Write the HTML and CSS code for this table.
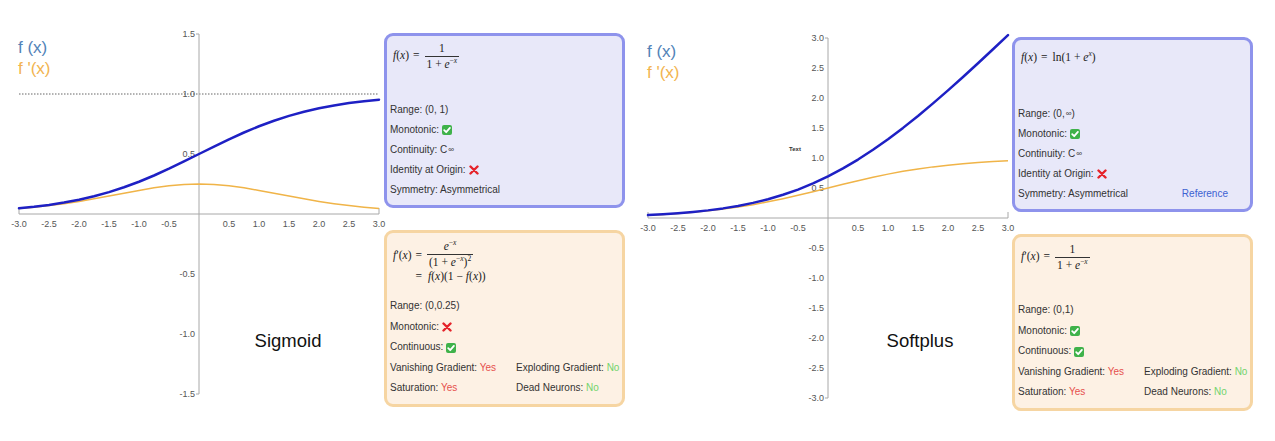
FILE: index.html
```html
<!DOCTYPE html>
<html lang="en">
<head>
<meta charset="utf-8">
<title>Activation functions</title>
<link rel="stylesheet" href="styles.css">
</head>
<body>
<div class="page">

  <!-- Sigmoid panel -->
  <section class="panel">
    <svg class="chart" viewBox="0 0 384 420" width="384" height="420">
      <text class="legend legend-f" x="18" y="53">f (x)</text>
      <text class="legend legend-d" x="18" y="74">f '(x)</text>

      <line class="dotted" x1="19" y1="94" x2="379" y2="94"/>

      <path class="axis" d="M19,208V214H379V208"/>
      <path class="axis" d="M196,34H199V394H196"/>

      <g class="ylab">
        <text x="195" y="34">1.5</text>
        <text x="195" y="94">1.0</text>
        <text x="195" y="154">0.5</text>
        <text x="195" y="274">-0.5</text>
        <text x="195" y="334">-1.0</text>
        <text x="195" y="394">-1.5</text>
      </g>
      <g class="xlab">
        <text x="19" y="227">-3.0</text>
        <text x="49" y="227">-2.5</text>
        <text x="79" y="227">-2.0</text>
        <text x="109" y="227">-1.5</text>
        <text x="139" y="227">-1.0</text>
        <text x="169" y="227">-0.5</text>
        <text x="229" y="227">0.5</text>
        <text x="259" y="227">1.0</text>
        <text x="289" y="227">1.5</text>
        <text x="319" y="227">2.0</text>
        <text x="349" y="227">2.5</text>
        <text x="379" y="227">3.0</text>
      </g>

      <polyline class="curve-d" points="19,208.58 34,207.22 49,205.59 64,203.65 79,201.40 94,198.86 109,196.10 124,193.23 139,190.41 154,187.85 169,185.80 184,184.46 199,184 214,184.46 229,185.80 244,187.85 259,190.41 274,193.23 289,196.10 304,198.86 319,201.40 334,203.65 349,205.59 364,207.22 379,208.58"/>
      <polyline class="curve-f" points="19,208.31 34,206.79 49,204.90 64,202.56 79,199.70 94,196.23 109,192.11 124,187.28 139,181.73 154,175.50 169,168.70 184,161.46 199,154 214,146.54 229,139.30 244,132.50 259,126.27 274,120.72 289,115.89 304,111.77 319,108.30 334,105.44 349,103.10 364,101.21 379,99.69"/>

      <text class="title" x="288" y="347">Sigmoid</text>
    </svg>

    <div class="cards">
      <div class="card card-blue">
        <div class="formula"><span class="mi">f</span>(<span class="mi">x</span>)<span class="op">=</span><span class="frac"><span class="num">1</span><span class="den">1 + <span class="mi">e</span><sup>−<span class="mi">x</span></sup></span></span></div>
        <div class="props">
          <div class="row">Range: (0, 1)</div>
          <div class="row">Monotonic: <span class="check" aria-label="yes"><svg viewBox="0 0 10 10"><path d="M2.2,5.2 4.2,7.2 7.9,2.9"/></svg></span></div>
          <div class="row">Continuity: C<span class="inf">∞</span></div>
          <div class="row">Identity at Origin: <span class="cross" aria-label="no"><svg viewBox="0 0 10 10"><path d="M1.5,1.5 8.5,8.5M8.5,1.5 1.5,8.5"/></svg></span></div>
          <div class="row">Symmetry: Asymmetrical</div>
        </div>
      </div>

      <div class="card card-orange">
        <div class="formula formula-grid">
          <span class="cell"><span class="mi">f</span>′(<span class="mi">x</span>)</span>
          <span class="cell op">=</span>
          <span class="cell"><span class="frac"><span class="num"><span class="mi">e</span><sup>−<span class="mi">x</span></sup></span><span class="den">(1 + <span class="mi">e</span><sup>−<span class="mi">x</span></sup>)<sup>2</sup></span></span></span>
          <span class="cell"></span>
          <span class="cell op">=</span>
          <span class="cell line2"><span class="mi">f</span>(<span class="mi">x</span>)(1 − <span class="mi">f</span>(<span class="mi">x</span>))</span>
        </div>
        <div class="props props-tall">
          <div class="row">Range: (0,0.25)</div>
          <div class="row">Monotonic: <span class="cross" aria-label="no"><svg viewBox="0 0 10 10"><path d="M1.5,1.5 8.5,8.5M8.5,1.5 1.5,8.5"/></svg></span></div>
          <div class="row">Continuous: <span class="check" aria-label="yes"><svg viewBox="0 0 10 10"><path d="M2.2,5.2 4.2,7.2 7.9,2.9"/></svg></span></div>
          <div class="row pair"><span>Vanishing Gradient: <span class="yes">Yes</span></span><span>Exploding Gradient: <span class="no">No</span></span></div>
          <div class="row pair"><span>Saturation: <span class="yes">Yes</span></span><span>Dead Neurons: <span class="no">No</span></span></div>
        </div>
      </div>
    </div>
  </section>

  <!-- Softplus panel -->
  <section class="panel panel-second">
    <svg class="chart" viewBox="0 0 384 420" width="384" height="420">
      <text class="legend legend-f" x="19" y="53">f (x)</text>
      <text class="legend legend-d" x="19" y="74">f '(x)</text>

      <path class="axis" d="M20,208V214H380V208"/>
      <path class="axis" d="M197,34H200V394H197"/>

      <g class="ylab">
        <text x="196" y="34">3.0</text>
        <text x="196" y="64">2.5</text>
        <text x="196" y="94">2.0</text>
        <text x="196" y="124">1.5</text>
        <text x="196" y="154">1.0</text>
        <text x="196" y="184">0.5</text>
        <text x="196" y="244">-0.5</text>
        <text x="196" y="274">-1.0</text>
        <text x="196" y="304">-1.5</text>
        <text x="196" y="334">-2.0</text>
        <text x="196" y="364">-2.5</text>
        <text x="196" y="394">-3.0</text>
      </g>
      <g class="xlab">
        <text x="20" y="227">-3.0</text>
        <text x="50" y="227">-2.5</text>
        <text x="80" y="227">-2.0</text>
        <text x="110" y="227">-1.5</text>
        <text x="140" y="227">-1.0</text>
        <text x="170" y="227">-0.5</text>
        <text x="230" y="227">0.5</text>
        <text x="260" y="227">1.0</text>
        <text x="290" y="227">1.5</text>
        <text x="320" y="227">2.0</text>
        <text x="350" y="227">2.5</text>
        <text x="380" y="227">3.0</text>
      </g>

      <text class="tiny" x="161" y="147">Text</text>

      <polyline class="curve-d" points="20,211.15 35,210.40 50,209.45 65,208.28 80,206.85 95,205.12 110,203.05 125,200.64 140,197.86 155,194.75 170,191.35 185,187.73 200,184 215,180.27 230,176.65 245,173.25 260,170.14 275,167.36 290,164.95 305,162.88 320,161.15 335,159.72 350,158.55 365,157.60 380,156.85"/>
      <polyline class="curve-f" points="20,211.08 35,210.28 50,209.27 65,207.99 80,206.38 95,204.39 110,201.92 125,198.88 140,195.20 155,190.79 170,185.56 185,179.44 200,172.41 215,164.44 230,155.56 245,145.79 260,135.20 275,123.88 290,111.92 305,99.39 320,86.38 335,72.99 350,59.27 365,45.28 380,31.08"/>

      <text class="title" x="292" y="343">Softplus</text>
    </svg>

    <div class="cards">
      <div class="card card-blue">
        <div class="formula formula-inline"><span class="mi">f</span>(<span class="mi">x</span>)<span class="op">=</span>ln(1 + <span class="mi">e</span><sup><span class="mi">x</span></sup>)</div>
        <div class="props">
          <div class="row">Range: (0, <span class="inf">∞</span>)</div>
          <div class="row">Monotonic: <span class="check" aria-label="yes"><svg viewBox="0 0 10 10"><path d="M2.2,5.2 4.2,7.2 7.9,2.9"/></svg></span></div>
          <div class="row">Continuity: C<span class="inf">∞</span></div>
          <div class="row">Identity at Origin: <span class="cross" aria-label="no"><svg viewBox="0 0 10 10"><path d="M1.5,1.5 8.5,8.5M8.5,1.5 1.5,8.5"/></svg></span></div>
          <div class="row row-link"><span>Symmetry: Asymmetrical</span><a class="ref" href="#">Reference</a></div>
        </div>
      </div>

      <div class="card card-orange">
        <div class="formula"><span class="mi">f</span>′(<span class="mi">x</span>)<span class="op">=</span><span class="frac"><span class="num">1</span><span class="den">1 + <span class="mi">e</span><sup>−<span class="mi">x</span></sup></span></span></div>
        <div class="props props-tall">
          <div class="row">Range: (0,1)</div>
          <div class="row">Monotonic: <span class="check" aria-label="yes"><svg viewBox="0 0 10 10"><path d="M2.2,5.2 4.2,7.2 7.9,2.9"/></svg></span></div>
          <div class="row">Continuous: <span class="check" aria-label="yes"><svg viewBox="0 0 10 10"><path d="M2.2,5.2 4.2,7.2 7.9,2.9"/></svg></span></div>
          <div class="row pair"><span>Vanishing Gradient: <span class="yes">Yes</span></span><span>Exploding Gradient: <span class="no">No</span></span></div>
          <div class="row pair"><span>Saturation: <span class="yes">Yes</span></span><span>Dead Neurons: <span class="no">No</span></span></div>
        </div>
      </div>
    </div>
  </section>

</div>
</body>
</html>
```

FILE: styles.css
```css
html, body {
  margin: 0;
  padding: 0;
  background: #ffffff;
}

body {
  font-family: "Liberation Sans", Arial, sans-serif;
  color: #333333;
}

.page {
  display: flex;
  width: 1275px;
  height: 441px;
  overflow: hidden;
}

.panel {
  display: flex;
  width: 628px;
  flex: none;
  align-items: flex-start;
}

.panel-second {
  margin-top: 4px;
}

.chart {
  display: block;
  flex: none;
  width: 384px;
  height: 420px;
  overflow: visible;
}

/* chart pieces */
.legend {
  font-family: "Liberation Sans", Arial, sans-serif;
  font-size: 17px;
}
.legend-f { fill: #5283b8; }
.legend-d { fill: #f2b450; }

.axis {
  fill: none;
  stroke: #a8a8a8;
  stroke-width: 1;
}

.dotted {
  stroke: #666666;
  stroke-width: 1;
  stroke-dasharray: 1.5 1.5;
}

.ylab text {
  font-family: "Liberation Sans", Arial, sans-serif;
  font-size: 9px;
  fill: #555555;
  text-anchor: end;
  dominant-baseline: central;
}

.xlab text {
  font-family: "Liberation Sans", Arial, sans-serif;
  font-size: 9px;
  fill: #555555;
  text-anchor: middle;
}

.tiny {
  font-family: "Liberation Sans", Arial, sans-serif;
  font-size: 6px;
  font-weight: bold;
  fill: #333333;
}

.curve-f {
  fill: none;
  stroke: #1e20c4;
  stroke-width: 2.5;
  stroke-linejoin: round;
  stroke-linecap: round;
}

.curve-d {
  fill: none;
  stroke: #f0b448;
  stroke-width: 1.5;
  stroke-linejoin: round;
}

.title {
  font-family: "Liberation Sans", Arial, sans-serif;
  font-size: 18.5px;
  fill: #111111;
  text-anchor: middle;
}

/* cards */
.cards {
  flex: none;
  width: 241px;
  margin-top: 33px;
  display: flex;
  flex-direction: column;
  gap: 22px;
}

.card {
  box-sizing: border-box;
  border: 3px solid;
  border-radius: 9px;
  padding: 4px 6px 5px 3px;
  display: flex;
  flex-direction: column;
  font-size: 10px;
  color: #333333;
}

.card-blue {
  height: 175px;
  background: #e8e8f9;
  border-color: #8e93ec;
}

.card-orange {
  height: 177px;
  background: #fdf1e4;
  border-color: #f6d5a2;
}

.formula {
  font-family: "Liberation Serif", "Times New Roman", serif;
  font-size: 11.5px;
  line-height: 14px;
  color: #222222;
  padding: 2px 0 0 3px;
  white-space: nowrap;
}

.formula-inline {
  padding-top: 6px;
}

.formula-grid {
  display: grid;
  grid-template-columns: auto auto auto;
  justify-content: start;
  align-items: center;
  padding-top: 3px;
}

.line2 {
  padding-left: 1px;
}

.mi {
  font-style: italic;
}

.op {
  padding: 0 5px 0 4px;
}

.formula sup {
  font-size: 7.5px;
  vertical-align: 5px;
  line-height: 0;
}

.frac {
  display: inline-flex;
  flex-direction: column;
  align-items: center;
  vertical-align: middle;
  line-height: 13px;
}

.frac .num {
  padding: 0 2px 1px;
}

.frac .den {
  border-top: 1px solid #333333;
  padding: 1px 2px 0;
}

.props {
  margin-top: auto;
}

.row {
  height: 20px;
  line-height: 20px;
  display: flex;
  align-items: center;
  white-space: nowrap;
}

.props-tall .row {
  height: 20.6px;
  line-height: 20.6px;
}

.row.pair {
  display: grid;
  grid-template-columns: 126px auto;
}

.row-link {
  justify-content: space-between;
  padding-right: 16px;
}

.ref {
  color: #3d62d2;
  text-decoration: none;
}

.inf {
  font-size: 8px;
  margin-left: 1px;
}

.yes { color: #e6504c; }
.no { color: #72d46c; }

.check {
  display: inline-block;
  width: 10px;
  height: 10px;
  margin-left: 3px;
  background: #3fb24a;
  border-radius: 2px;
}

.check svg {
  display: block;
  width: 10px;
  height: 10px;
  fill: none;
  stroke: #ffffff;
  stroke-width: 1.8;
  stroke-linecap: round;
  stroke-linejoin: round;
}

.cross {
  display: inline-block;
  width: 10px;
  height: 10px;
  margin-left: 3px;
}

.cross svg {
  display: block;
  width: 10px;
  height: 10px;
  fill: none;
  stroke: #e5232a;
  stroke-width: 2.4;
  stroke-linecap: round;
}
```
